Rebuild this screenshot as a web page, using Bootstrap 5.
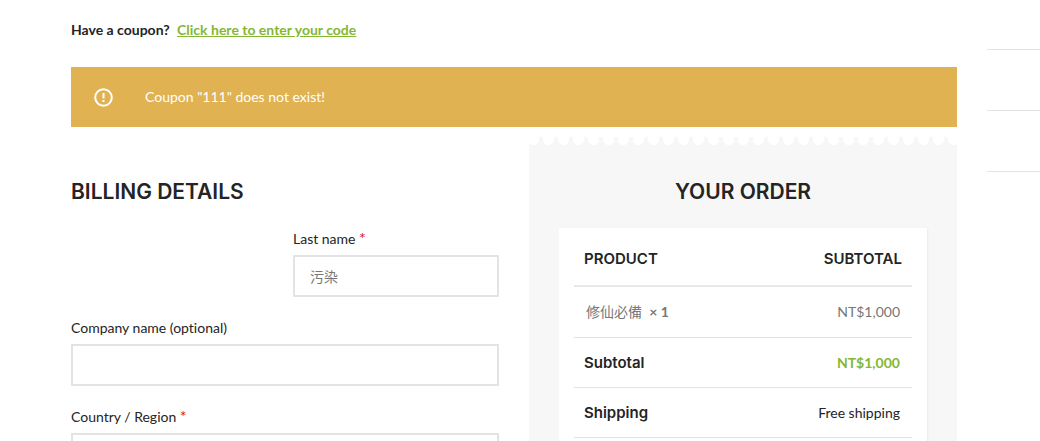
<!DOCTYPE html>
<html lang="en">
<head>
<meta charset="utf-8">
<meta name="viewport" content="width=device-width, initial-scale=1">
<title>Checkout</title>
<link href="https://cdn.jsdelivr.net/npm/bootstrap@5.3.0/dist/css/bootstrap.min.css" rel="stylesheet">
<style>
  body { font: 14px/22px Lato, "Noto Sans CJK TC", sans-serif; font-variant-ligatures: none; color: #242424; background: #fff; }
  .page { height: 100vh; }
  .checkout { padding: 19px 30px 0 71px; }
  .coupon-link, .coupon-link:hover { color: #83b735; }
  .notice { height: 60px; margin-top: 26px; padding: 0 23px; gap: 32px; background: #e0b252; }
  .columns { --bs-gutter-x: 30px; margin-top: 10px; }
  .title { font: 600 21px/32px Inter, sans-serif; margin: 0; text-transform: uppercase; }
  .billing { padding-top: 39px; }
  .fields { margin-top: 20px; gap: 20px 16px; }
  .field label { display: block; margin-bottom: 5px; }
  .field .form-control, .field .form-select { height: 42px; border: 2px solid #e3e3e3; border-radius: 0; padding: 0 15px; font-size: 14px; color: #777; }
  .required-mark { color: #e01020; font-size: 16px; line-height: 16px; }
  .order { min-height: 100vh; padding: 30px; background: #f7f7f7; }
  .scallop { height: 9px; background: radial-gradient(circle at 50% 2px, #fff 6px, #f7f7f7 6px) -3px 0 / 15px 9px repeat-x; }
  .receipt { margin-top: 20px; padding: 0 15px; background: #fff; box-shadow: 1px 1px 2px rgba(0,0,0,.06); min-height: 300px; }
  .receipt table { font-size: 14px; color: #242424; margin: 0; }
  .receipt .table > * > tr > * { padding: 14px 12px 13px; border-bottom: 1px solid #e3e3e3; vertical-align: middle; color: inherit; background: none; }
  .receipt .table > * > tr > :first-child { padding-left: 10px; }
  .receipt .table > thead > tr > th { font: 600 15px/26px Inter, sans-serif; text-transform: uppercase; padding: 18px 10px 13px; border-bottom: 2px solid #e8e8e8; }
  .receipt .table > tbody > tr > th { font: 600 15px/22px Inter, sans-serif; }
  .receipt .table > tbody > .item { color: #777; }
  .receipt .table > tbody > .item > * { padding-bottom: 14px; }
  .receipt .table > tbody > .item > :first-child { padding-left: 12px; }
  .total { color: #83b735; }
  .side { width: 53px; padding-top: 49px; }
  .side li { height: 61px; border-top: 1px solid #e3e3e3; }
</style>
</head>
<body>
<div class="page d-flex overflow-hidden">
  <main class="checkout flex-grow-1">
    <div class="fw-bold">Have a coupon? <a class="coupon-link ms-1" href="#coupon">Click here to enter your code</a></div>
    <div class="notice d-flex align-items-center text-white" role="alert">
      <svg width="19" height="19" viewBox="0 0 19 19" fill="none" stroke="#fff" stroke-width="2" aria-hidden="true"><circle cx="9.5" cy="9.5" r="8.3"/><path d="M9.5 5v5.5M9.5 12v2"/></svg>
      <span>Coupon "111" does not exist!</span>
    </div>
    <div class="row columns">
      <section class="col-6 billing">
        <h3 class="title">Billing details</h3>
        <form class="fields d-grid">
          <div class="row gx-3">
            <div class="field col-6 offset-6"><label for="last">Last name <span class="required-mark">*</span></label><input class="form-control" id="last" type="text" value="污染"></div>
          </div>
          <div class="field"><label for="company">Company name (optional)</label><input class="form-control" id="company" type="text"></div>
          <div class="field"><label for="country">Country / Region <span class="required-mark">*</span></label><select class="form-select" id="country"><option>Taiwan</option></select></div>
        </form>
      </section>
      <section class="col-6">
        <div class="scallop"></div>
        <div class="order">
          <h3 class="title text-center">Your order</h3>
          <div class="receipt">
            <table class="table">
              <thead><tr><th>Product</th><th class="text-end">Subtotal</th></tr></thead>
              <tbody>
                <tr class="item"><td>修仙必備&nbsp; <strong>×&nbsp;1</strong></td><td class="text-end">NT$1,000</td></tr>
                <tr><th scope="row">Subtotal</th><td class="text-end fw-bold"><span class="total">NT$1,000</span></td></tr>
                <tr><th scope="row">Shipping</th><td class="text-end">Free shipping</td></tr>
              </tbody>
            </table>
          </div>
        </div>
      </section>
    </div>
  </main>
  <aside class="side flex-shrink-0"><ul class="list-unstyled mb-0"><li></li><li></li><li></li></ul></aside>
</div>
<script src="https://cdn.jsdelivr.net/npm/bootstrap@5.3.0/dist/js/bootstrap.bundle.min.js"></script>
</body>
</html>
